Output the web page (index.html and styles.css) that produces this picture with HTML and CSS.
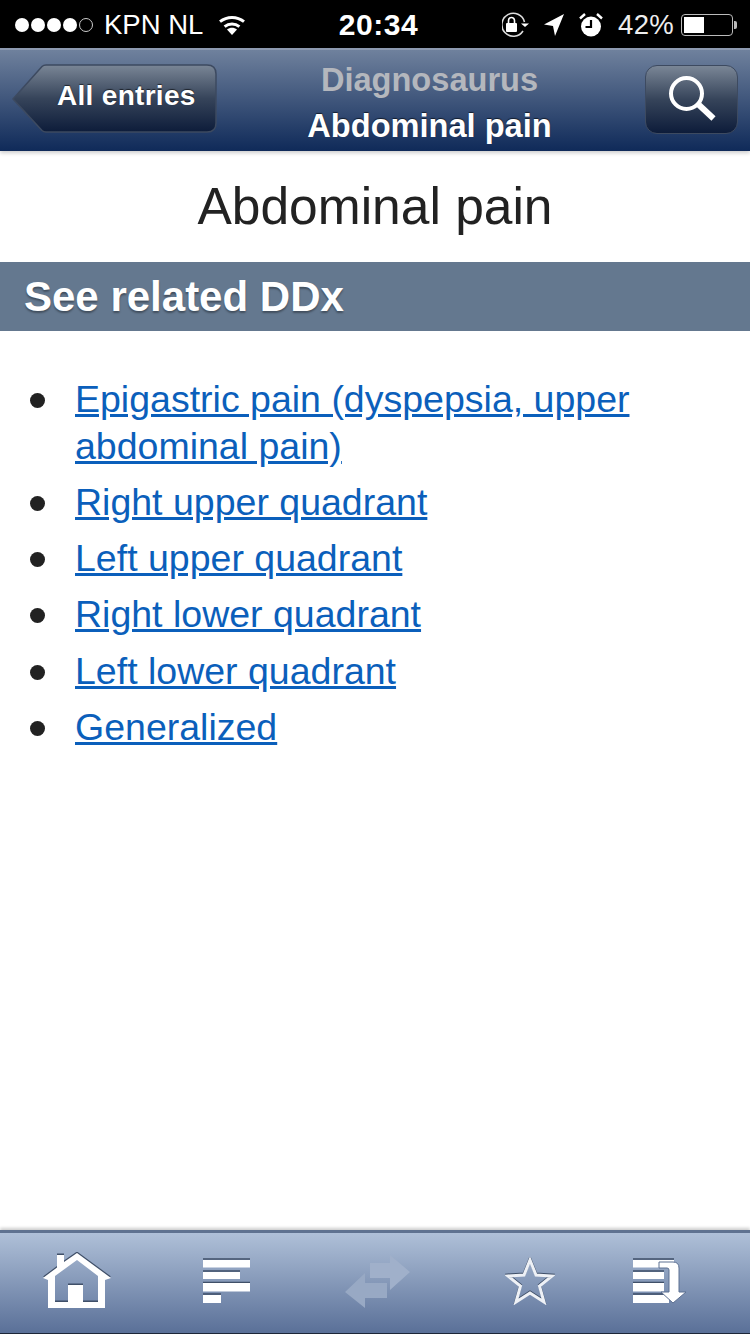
FILE: index.html
```html
<!DOCTYPE html>
<html lang="en">
<head>
    <meta charset="UTF-8">
    <meta name="viewport" content="width=device-width, initial-scale=1.0">
    <title>Diagnosaurus - Abdominal pain</title>
    <link rel="stylesheet" href="styles.css">
</head>
<body>
    <div class="page">
        <div class="status-bar">
            <div class="status-left">
                <span class="signal"><i></i><i></i><i></i><i></i><i class="off"></i></span>
                <span class="carrier">KPN NL</span>
                <svg class="wifi" width="30" height="22" viewBox="0 0 30 22">
                    <path d="M15 21l-5-5.500c3-2.400 7-2.400 10 0z" fill="#fff"/>
                    <path d="M7.600 12.600c4.400-3.600 10.400-3.600 14.800 0" fill="none" stroke="#fff" stroke-width="3"/>
                    <path d="M3 7.600c7-5.600 17-5.600 24 0" fill="none" stroke="#fff" stroke-width="3"/>
                </svg>
            </div>
            <div class="clock">20:34</div>
            <div class="status-right">
                <svg width="28" height="28" viewBox="0 0 28 28">
                    <path d="M21 20a11.500 11.500 0 1 1 1.500-9" fill="none" stroke="#ddd" stroke-width="1.600"/>
                    <path d="M19 12.500h8l-4 3.500z" fill="#fff"/>
                    <rect x="4" y="12" width="11" height="9" rx="1" fill="#fff"/>
                    <path d="M6.500 12V9.500a3 3 0 0 1 6 0V12" fill="none" stroke="#fff" stroke-width="1.600"/>
                </svg>
                <svg class="arrow" width="22" height="24" viewBox="0 0 22 24">
                    <path d="M21 1L1 11.500l9 1.500 2 10z" fill="#fff"/>
                </svg>
                <svg class="alarm" width="24" height="26" viewBox="0 0 24 26">
                    <circle cx="12" cy="14.500" r="10" fill="#fff"/>
                    <path d="M12 8v7H6.500" fill="none" stroke="#000" stroke-width="2.200"/>
                    <path d="M1 6.500L6 2M23 6.500L18 2" stroke="#fff" stroke-width="2.400" fill="none"/>
                </svg>
                <span class="percent">42%</span>
                <span class="battery"><span class="battery-fill"></span></span>
                <span class="battery-tip"></span>
            </div>
        </div>

        <div class="nav-bar">
            <a class="back-button">
                <svg class="back-shape" width="206" height="70" viewBox="0 0 206 70">
                    <defs>
                        <linearGradient id="backFill" x1="0" y1="0" x2="0" y2="1">
                            <stop offset="0" stop-color="#7a8696"/>
                            <stop offset="0.5" stop-color="#36445a"/>
                            <stop offset="1" stop-color="#0d1c3a"/>
                        </linearGradient>
                    </defs>
                    <path d="M1 35L30 2.500Q31.500 1 34 1H195Q204 1 204 10V59Q204 68 195 68H34Q31.500 68 30 66.500Z" fill="url(#backFill)" stroke="#3d4a60" stroke-width="1.500"/>
                </svg>
                <span class="back-label">All entries</span>
            </a>
            <div class="nav-titles">
                <div class="nav-app">Diagnosaurus</div>
                <div class="nav-page">Abdominal pain</div>
            </div>
            <a class="search-button">
                <svg width="52" height="52" viewBox="0 0 52 52">
                    <circle cx="20.500" cy="20.500" r="15.500" fill="none" stroke="#fff" stroke-width="4"/>
                    <path d="M32 31l15.500 14.500" stroke="#fff" stroke-width="6"/>
                </svg>
            </a>
        </div>

        <div class="content">
            <h1 class="title">Abdominal pain</h1>
            <h2 class="section-head">See related DDx</h2>
            <ul class="ddx-list">
                <li><a href="#">Epigastric pain (dyspepsia, upper abdominal pain)</a></li>
                <li><a href="#">Right upper quadrant</a></li>
                <li><a href="#">Left upper quadrant</a></li>
                <li><a href="#">Right lower quadrant</a></li>
                <li><a href="#">Left lower quadrant</a></li>
                <li><a href="#">Generalized</a></li>
            </ul>
        </div>

        <div class="tab-bar">
            <!-- home -->
            <svg width="70" height="58" viewBox="0 0 70 58">
                <path d="M35 1L69 26L63 28V56H6V28L1 26L15 15.500V3H22V10ZM35 8L13 24V50H26V33H41V50H56V24Z" fill="#3f4f68" fill-rule="evenodd" transform="translate(0 -1.500)"/>
                <path d="M35 1L69 26L63 28V56H6V28L1 26L15 15.500V3H22V10ZM35 8L13 24V50H26V33H41V50H56V24Z" fill="#fff" fill-rule="evenodd"/>
            </svg>
            <!-- contents -->
            <svg width="48" height="46" viewBox="0 0 48 46">
                <path d="M0 1h47M0 13h37M0 24.500h47M0 36h18" stroke="#3f4f68" stroke-width="1.500"/>
                <path d="M0 2h47v7.500H0zM0 14h37v7H0zM0 25h47v8.500H0zM0 37h18v8H0z" fill="#fff"/>
            </svg>
            <!-- previous / next, disabled -->
            <svg class="tab-swap" width="67" height="55" viewBox="0 0 67 55">
                <path d="M66 18L46 1V9H26V24H46V36Z" fill="#a0b0ca"/>
                <path d="M1 38L21 19V29H43V44H21V54Z" fill="#98a9c4"/>
            </svg>
            <!-- favourites -->
            <svg class="tab-star" width="50" height="48" viewBox="0 0 50 48">
                <path d="M25 3l6 15 16 1-12.500 10 4.500 16-14-9-14 9 4.500-16L3 19l16-1z" fill="none" stroke="#3f4f68" stroke-width="3" transform="translate(0 -1)"/>
                <path d="M25 3l6 15 16 1-12.500 10 4.500 16-14-9-14 9 4.500-16L3 19l16-1z" fill="none" stroke="#eef1f6" stroke-width="3"/>
            </svg>
            <!-- table of contents, jump down -->
            <svg class="tab-jump" width="54" height="46" viewBox="0 0 54 46">
                <path d="M0 1h41M0 13h31M0 24.500h31M0 36h31" stroke="#3f4f68" stroke-width="1.500"/>
                <path d="M0 2h41v7.500H0zM0 14h31v7H0zM0 25h31v8.500H0zM0 37h36v8H0z" fill="#fff"/>
                <path d="M26 4H40Q46 4 46 10V34H53L40 45L28 34H36V12Q36 10 34 10H26Z" fill="#fff" stroke="#5d7092"/>
            </svg>
        </div>
    </div>
</body>
</html>
```

FILE: styles.css
```css
* {
    box-sizing: border-box;
}
html, body {
    margin: 0;
    padding: 0;
}
body {
    font-family: "Liberation Sans", Arial, sans-serif;
    background-color: #fff;
}
.page {
    display: flex;
    flex-direction: column;
    width: 750px;
    height: 1334px;
    overflow: hidden;
}

/* phone status bar */
.status-bar {
    display: grid;
    grid-template-columns: 1fr auto 1fr;
    align-items: center;
    height: 48px;
    padding: 2px 13px 0 15px;
    background: #000;
    color: #fff;
    font-size: 27.5px;
}
.status-left, .status-right {
    display: flex;
    align-items: center;
}
.status-right {
    justify-content: flex-end;
}
.signal {
    display: flex;
    gap: 2px;
    margin-right: 11px;
}
.signal i {
    width: 14px;
    height: 14px;
    border-radius: 50%;
    background: #fff;
}
.signal i.off {
    background: none;
    border: 1px solid #ccc;
}
.wifi {
    margin-left: 14px;
}
.clock {
    margin-left: 5px;
    font-size: 30px;
    font-weight: bold;
    letter-spacing: 0.6px;
}
.arrow {
    margin-left: 13px;
}
.alarm {
    margin-left: 14px;
}
.percent {
    margin-left: 15px;
    color: #eee;
    letter-spacing: 0.3px;
}
.battery {
    display: block;
    width: 52px;
    height: 22px;
    margin-left: 7px;
    padding: 2px;
    border: 1px solid #bbb;
    border-radius: 4px;
}
.battery-fill {
    display: block;
    width: 20px;
    height: 100%;
    background: #fff;
}
.battery-tip {
    width: 3px;
    height: 8px;
    margin-left: 1px;
    background: #bbb;
    border-radius: 0 2px 2px 0;
}

/* title bar */
.nav-bar {
    display: flex;
    align-items: center;
    justify-content: space-between;
    height: 103px;
    padding: 0 12px 3px 12px;
    background: linear-gradient(#6f819d, #0f2a59);
    border-top: 2px solid #8d9ab0;
    position: relative;
    z-index: 1;
    box-shadow: 0 2px 4px rgba(0, 0, 0, 0.2);
}
.back-button {
    display: block;
    position: relative;
    width: 206px;
    height: 70px;
    color: #fff;
}
.back-shape {
    display: block;
}
.back-label {
    position: absolute;
    left: 45px;
    top: 16px;
    font-size: 28px;
    font-weight: bold;
    letter-spacing: 0.3px;
    text-shadow: 0 -1px 1px rgba(0, 0, 0, 0.6);
}
.nav-titles {
    padding-top: 8px;
    margin-right: 4px;
    text-align: center;
    font-weight: bold;
    font-size: 32.6px;
    line-height: 46px;
}
.nav-app {
    color: #b4b7bd;
}
.nav-page {
    color: #fff;
    text-shadow: 0 -1px 1px rgba(0, 0, 0, 0.6);
}
.search-button {
    display: flex;
    align-items: center;
    justify-content: center;
    width: 93px;
    height: 69px;
    border: 1px solid #3d4a60;
    border-radius: 12px;
    background: linear-gradient(#7a8696, #36445a 50%, #0d1c3a);
}

/* page body */
.content {
    flex: 1;
    color: #222;
}
.title {
    margin: 0;
    height: 111px;
    text-align: center;
    font-size: 51.5px;
    font-weight: normal;
    line-height: 111px;
}
.section-head {
    margin: 0;
    height: 69px;
    padding-left: 24px;
    background: #64788f;
    color: #fff;
    font-size: 42px;
    font-weight: bold;
    line-height: 69px;
    text-shadow: 0 2px 2px rgba(0, 0, 0, 0.35);
}
.ddx-list {
    margin: 45px 0 0 0;
    padding: 0 100px 0 30px;
    list-style: none;
    font-size: 37.5px;
    line-height: 46.500px;
}
.ddx-list li {
    display: flex;
    margin-bottom: 9.800px;
}
.ddx-list li::before {
    content: "";
    flex: none;
    width: 15px;
    height: 15px;
    margin: 17px 30px 0 0;
    border-radius: 50%;
    background: #222;
}
.ddx-list a {
    color: #0b5fbb;
}

/* bottom toolbar */
.tab-bar {
    display: flex;
    align-items: center;
    gap: 91px;
    height: 104px;
    padding: 0 0 4px 42px;
    background: linear-gradient(#afc0d8, #5a7098);
    border-top: 3px solid #5f7290;
    border-bottom: 1px solid #1c2638;
    box-shadow: 0 -2px 3px rgba(0, 0, 0, 0.2);
}
.tab-swap {
    margin-left: 2px;
}
.tab-star {
    margin-left: 3px;
}
.tab-jump {
    margin-left: -13px;
}
```
